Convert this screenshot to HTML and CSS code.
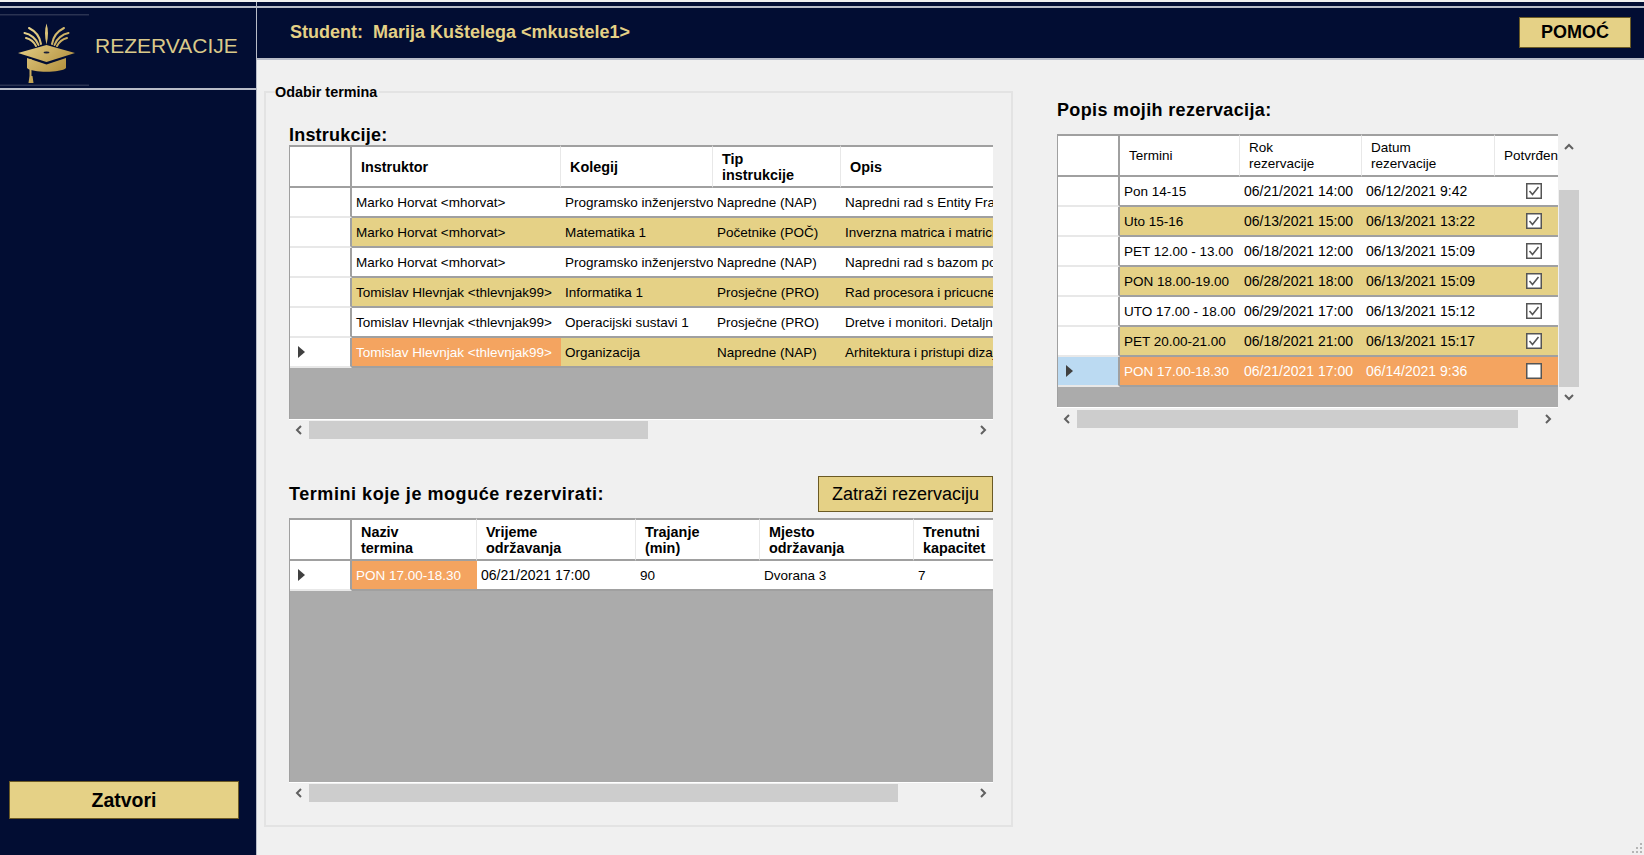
FILE: index.html
```html
<!DOCTYPE html>
<html lang="en">
<head>
    <meta charset="UTF-8">
    <meta name="viewport" content="width=device-width, initial-scale=1.0">
    <title>Rezervacije</title>
    <link rel="stylesheet" href="styles.css">
</head>
<body>
<svg class="defs" width="0" height="0">
    <defs>
        <linearGradient id="gold" gradientUnits="userSpaceOnUse" x1="20" y1="10" x2="72" y2="66">
            <stop offset="0" stop-color="#f3e09a"/>
            <stop offset="1" stop-color="#a8832f"/>
        </linearGradient>
        <symbol id="arrow-left" viewBox="0 0 10 10"><path d="M7 1 3 5l4 4" fill="none" stroke="#606060" stroke-width="2"/></symbol>
        <symbol id="arrow-right" viewBox="0 0 10 10"><path d="M3 1l4 4-4 4" fill="none" stroke="#606060" stroke-width="2"/></symbol>
        <symbol id="arrow-up" viewBox="0 0 10 10"><path d="M1 7l4-4 4 4" fill="none" stroke="#606060" stroke-width="2"/></symbol>
        <symbol id="arrow-down" viewBox="0 0 10 10"><path d="M1 3l4 4 4-4" fill="none" stroke="#606060" stroke-width="2"/></symbol>
        <symbol id="check-on" viewBox="0 0 16 16"><rect x=".75" y=".75" width="14.500" height="14.500" fill="#fff" stroke="#555" stroke-width="1.500"/><path d="M3.500 8l3 3.500 6-7.500" fill="none" stroke="#555" stroke-width="1.600"/></symbol>
        <symbol id="check-off" viewBox="0 0 16 16"><rect x=".75" y=".75" width="14.500" height="14.500" fill="#fff" stroke="#555" stroke-width="1.500"/></symbol>
    </defs>
</svg>

<div class="app">
    <aside class="sidebar">
        <div class="logo-panel">
            <svg class="logo" width="90" height="73" viewBox="0 0 90 73">
                <rect x="0" y="0" width="89" height="1.500" fill="#2a3352"/>
                <rect x="0" y="70.500" width="89" height="1.500" fill="#2a3352"/>
                <path d="M46.500 9.500c2 6 2 13 0 21c-2-8-2-15 0-21z" fill="url(#gold)"/>
                <g fill="none" stroke="url(#gold)" stroke-width="2" stroke-linecap="round">
                    <path d="M41 30c-1-7-6-13-12-16"/>
                    <path d="M52 30c1-7 6-13 12-16"/>
                    <path d="M38.500 31c-2-6-8-11-14-12"/>
                    <path d="M54.500 31c2-6 8-11 14-12"/>
                    <path d="M36 32c-2-4-6-7-10-8"/>
                    <path d="M57 32c2-4 6-7 10-8"/>
                </g>
                <path d="M18 39 46.500 31 75 39 46.500 48z" fill="url(#gold)"/>
                <ellipse cx="46.500" cy="38.500" rx="3" ry="1" fill="#1a1f3a"/>
                <path d="M27 44l19.500 6.500L66 44v10c-5 5-34 5-39 0z" fill="url(#gold)"/>
                <path d="M29.500 45h2v17h1l1 7h-5l1-7z" fill="url(#gold)"/>
            </svg>
            <span class="logo-text">REZERVACIJE</span>
        </div>
        <button class="gold-btn close-btn">Zatvori</button>
    </aside>

    <main class="main">
        <div class="top-strip"></div>
        <header class="topbar">
            <span class="student">Student:&nbsp; Marija Kuštelega &lt;mkustele1&gt;</span>
            <button class="gold-btn help-btn">POMOĆ</button>
        </header>

        <div class="content">
            <fieldset class="group">
                <legend>Odabir termina</legend>

                <h2 class="section-title first">Instrukcije:</h2>
                <div class="grid">
                    <table class="table-a">
                        <colgroup>
                            <col class="c-head"><col class="c-209"><col class="c-152"><col class="c-128"><col class="c-400">
                        </colgroup>
                        <thead class="bold-head">
                            <tr><th></th><th>Instruktor</th><th>Kolegij</th><th>Tip<br>instrukcije</th><th>Opis</th></tr>
                        </thead>
                        <tbody>
                            <tr><th></th><td>Marko Horvat &lt;mhorvat&gt;</td><td>Programsko inženjerstvo</td><td>Napredne (NAP)</td><td>Napredni rad s Entity Framework</td></tr>
                            <tr class="alt"><th></th><td>Marko Horvat &lt;mhorvat&gt;</td><td>Matematika 1</td><td>Početnike (POČ)</td><td>Inverzna matrica i matricne jednadzbe</td></tr>
                            <tr><th></th><td>Marko Horvat &lt;mhorvat&gt;</td><td>Programsko inženjerstvo</td><td>Napredne (NAP)</td><td>Napredni rad s bazom podataka</td></tr>
                            <tr class="alt"><th></th><td>Tomislav Hlevnjak &lt;thlevnjak99&gt;</td><td>Informatika 1</td><td>Prosječne (PRO)</td><td>Rad procesora i pricucne memorije</td></tr>
                            <tr><th></th><td>Tomislav Hlevnjak &lt;thlevnjak99&gt;</td><td>Operacijski sustavi 1</td><td>Prosječne (PRO)</td><td>Dretve i monitori. Detaljna analiza</td></tr>
                            <tr class="alt"><th class="current"><i class="caret"></i></th><td class="picked">Tomislav Hlevnjak &lt;thlevnjak99&gt;</td><td>Organizacija</td><td>Napredne (NAP)</td><td>Arhitektura i pristupi dizajnu sustava</td></tr>
                        </tbody>
                    </table>
                </div>
                <div class="hscroll">
                    <svg class="arrow"><use href="#arrow-left"/></svg>
                    <div class="thumb thumb-a"></div>
                    <svg class="arrow arrow-end"><use href="#arrow-right"/></svg>
                </div>

                <div class="title-row">
                    <h2 class="section-title spaced">Termini koje je moguće rezervirati:</h2>
                    <button class="gold-btn request-btn">Zatraži rezervaciju</button>
                </div>
                <div class="grid grid-tall">
                    <table class="table-b">
                        <colgroup>
                            <col class="c-head"><col class="c-125"><col class="c-159"><col class="c-124"><col class="c-154"><col class="c-100">
                        </colgroup>
                        <thead class="bold-head">
                            <tr><th></th><th>Naziv<br>termina</th><th>Vrijeme<br>održavanja</th><th>Trajanje<br>(min)</th><th>Mjesto<br>održavanja</th><th>Trenutni<br>kapacitet</th></tr>
                        </thead>
                        <tbody>
                            <tr><th><i class="caret"></i></th><td class="picked">PON 17.00-18.30</td><td class="date">06/21/2021 17:00</td><td>90</td><td>Dvorana 3</td><td>7</td></tr>
                        </tbody>
                    </table>
                </div>
                <div class="hscroll">
                    <svg class="arrow"><use href="#arrow-left"/></svg>
                    <div class="thumb thumb-b"></div>
                    <svg class="arrow arrow-end"><use href="#arrow-right"/></svg>
                </div>
            </fieldset>

            <section class="reservations">
                <h2 class="section-title wide">Popis mojih rezervacija:</h2>
                <div class="res-wrap">
                    <div class="res-left">
                        <div class="grid grid-res">
                            <table class="table-c">
                                <colgroup>
                                    <col class="c-head"><col class="c-120"><col class="c-122"><col class="c-133"><col class="c-64">
                                </colgroup>
                                <thead>
                                    <tr><th></th><th>Termini</th><th>Rok<br>rezervacije</th><th>Datum<br>rezervacije</th><th>Potvrđen</th></tr>
                                </thead>
                                <tbody>
                                    <tr><th></th><td>Pon 14-15</td><td class="date">06/21/2021 14:00</td><td class="date">06/12/2021 9:42</td><td class="tick"><svg class="check"><use href="#check-on"/></svg></td></tr>
                                    <tr class="alt"><th></th><td>Uto 15-16</td><td class="date">06/13/2021 15:00</td><td class="date">06/13/2021 13:22</td><td class="tick"><svg class="check"><use href="#check-on"/></svg></td></tr>
                                    <tr><th></th><td>PET 12.00 - 13.00</td><td class="date">06/18/2021 12:00</td><td class="date">06/13/2021 15:09</td><td class="tick"><svg class="check"><use href="#check-on"/></svg></td></tr>
                                    <tr class="alt"><th></th><td>PON 18.00-19.00</td><td class="date">06/28/2021 18:00</td><td class="date">06/13/2021 15:09</td><td class="tick"><svg class="check"><use href="#check-on"/></svg></td></tr>
                                    <tr><th></th><td>UTO 17.00 - 18.00</td><td class="date">06/29/2021 17:00</td><td class="date">06/13/2021 15:12</td><td class="tick"><svg class="check"><use href="#check-on"/></svg></td></tr>
                                    <tr class="alt"><th></th><td>PET 20.00-21.00</td><td class="date">06/18/2021 21:00</td><td class="date">06/13/2021 15:17</td><td class="tick"><svg class="check"><use href="#check-on"/></svg></td></tr>
                                    <tr class="selected"><th class="current blue"><i class="caret"></i></th><td>PON 17.00-18.30</td><td class="date">06/21/2021 17:00</td><td class="date">06/14/2021 9:36</td><td class="tick"><svg class="check"><use href="#check-off"/></svg></td></tr>
                                </tbody>
                            </table>
                        </div>
                        <div class="hscroll">
                            <svg class="arrow"><use href="#arrow-left"/></svg>
                            <div class="thumb thumb-c"></div>
                            <svg class="arrow arrow-end"><use href="#arrow-right"/></svg>
                        </div>
                    </div>
                    <div class="vscroll">
                        <svg class="arrow"><use href="#arrow-up"/></svg>
                        <div class="vthumb"></div>
                        <svg class="arrow"><use href="#arrow-down"/></svg>
                    </div>
                </div>
            </section>
        </div>
    </main>
</div>

<svg class="grip" width="14" height="14" viewBox="0 0 14 14" fill="#b5b5b5">
    <rect x="10" y="2" width="2" height="2"/>
    <rect x="6" y="6" width="2" height="2"/><rect x="10" y="6" width="2" height="2"/>
    <rect x="2" y="10" width="2" height="2"/><rect x="6" y="10" width="2" height="2"/><rect x="10" y="10" width="2" height="2"/>
</svg>
</body>
</html>
```

FILE: styles.css
```css
* {
    box-sizing: border-box;
}

body {
    font-family: "Liberation Sans", Arial, sans-serif;
    background-color: #f0f0f0;
    margin: 0;
    height: 855px;
    overflow: hidden;
    color: #000;
}

.defs {
    display: block;
    height: 0;
}

.app {
    display: flex;
    height: 855px;
    padding-top: 2px;
}

/* sidebar */
.sidebar {
    width: 257px;
    flex-shrink: 0;
    background-color: #020d33;
    border-right: 1px solid #b8bcc8;
    display: flex;
    flex-direction: column;
    padding-top: 4px;
}

.logo-panel {
    height: 84px;
    border-top: 2px solid #b8bcc8;
    border-bottom: 2px solid #b8bcc8;
    display: flex;
    align-items: center;
}

.logo {
    flex-shrink: 0;
    margin-top: 4px;
}

.logo-text {
    margin: 0 0 4px 5px;
    font-size: 21px;
    color: #d9c98a;
}

.gold-btn {
    font-family: "Liberation Sans", Arial, sans-serif;
    background-color: #e5d186;
    border: 1px solid #6b5a24;
    color: #000;
    padding: 0;
}

.close-btn {
    margin: auto 0 36px 9px;
    width: 230px;
    height: 38px;
    font-size: 19.500px;
    font-weight: bold;
}

/* top bar */
.main {
    flex: 1;
    min-width: 0;
    display: flex;
    flex-direction: column;
}

.top-strip {
    height: 4px;
    background-color: #020d33;
}

.topbar {
    height: 54px;
    background-color: #020d33;
    border-top: 2px solid #b8bcc8;
    border-bottom: 2px solid #b8bcc8;
    display: flex;
    align-items: center;
    justify-content: space-between;
    padding: 0 13px 2px 33px;
}

.student {
    color: #e5d186;
    font-size: 18px;
    font-weight: bold;
}

.help-btn {
    width: 112px;
    height: 31px;
    font-size: 18px;
    font-weight: bold;
}

/* content */
.content {
    display: flex;
    align-items: flex-start;
}

.group {
    margin: 24px 0 0 7px;
    padding: 0 0 0 23px;
    width: 749px;
    height: 743px;
    border: 2px solid #e3e3e3;
    min-width: 0;
}

.group legend {
    margin-left: -14px;
    padding: 0 2px 0 0;
    font-size: 14.400px;
    font-weight: bold;
    line-height: 16px;
}

.section-title {
    margin: 0;
    font-size: 18px;
    font-weight: bold;
    line-height: 20px;
}

.section-title.first {
    margin-top: 25px;
    letter-spacing: .2px;
}

.section-title.spaced {
    letter-spacing: .55px;
}

.section-title.wide {
    letter-spacing: .35px;
}

.title-row {
    width: 704px;
    display: flex;
    align-items: center;
    justify-content: space-between;
    margin-top: 37px;
    margin-bottom: 6px;
}

.request-btn {
    width: 175px;
    height: 36px;
    font-size: 18px;
}

/* data grids */
.grid {
    width: 704px;
    height: 274px;
    background-color: #ababab;
    border-left: 1px solid #a0a0a0;
    overflow: hidden;
}

.grid-tall {
    height: 264px;
}

.grid-res {
    width: 501px;
    height: 273px;
}

.grid table {
    border-collapse: separate;
    border-spacing: 0;
    table-layout: fixed;
    font-size: 13.500px;
}

.table-a { width: 951px; }
.table-b { width: 724px; }
.table-c { width: 501px; }

.c-head { width: 62px; }
.c-209 { width: 209px; }
.c-152 { width: 152px; }
.c-128 { width: 128px; }
.c-400 { width: 400px; }
.c-125 { width: 125px; }
.c-159 { width: 159px; }
.c-124 { width: 124px; }
.c-154 { width: 154px; }
.c-100 { width: 100px; }
.c-120 { width: 120px; }
.c-122 { width: 122px; }
.c-133 { width: 133px; }
.c-64 { width: 64px; }

.grid thead th {
    height: 43px;
    background-color: #fff;
    border-top: 2px solid #a0a0a0;
    border-bottom: 2px solid #a0a0a0;
    border-right: 1px solid #e8e8e8;
    padding: 0 0 0 9px;
    text-align: left;
    font-weight: normal;
    line-height: 16px;
    white-space: nowrap;
    overflow: hidden;
}

.grid thead th:first-child {
    border-right: 2px solid #a0a0a0;
}

.bold-head th {
    font-size: 14.400px;
    font-weight: bold !important;
}

.grid tbody th {
    height: 30px;
    padding: 0;
    background-color: #fff;
    border-right: 2px solid #a0a0a0;
    border-bottom: 2px solid #e8e8e8;
    text-align: left;
}

.grid td {
    height: 30px;
    padding: 0 0 0 4px;
    background-color: #fff;
    border-bottom: 2px solid #a0a0a0;
    white-space: nowrap;
    overflow: hidden;
}

.grid td.date {
    font-size: 14px;
}

.grid .alt td {
    background-color: #e5d186;
}

.grid td.picked,
.grid .selected td {
    background-color: #f4a460;
    color: #fff;
}

.grid th.blue {
    background-color: #bbdaf2;
}

.grid td.tick {
    padding: 0;
}

.caret {
    display: block;
    margin-left: 8px;
    width: 0;
    height: 0;
    border-top: 6px solid transparent;
    border-bottom: 6px solid transparent;
    border-left: 7px solid #404040;
}

.check {
    display: block;
    margin-left: 31px;
    width: 16px;
    height: 16px;
}

/* scrollbars */
.hscroll {
    width: 704px;
    height: 20px;
    display: flex;
    align-items: center;
    border-top: 1px solid #fff;
}

.res-left .hscroll {
    width: 501px;
    height: 22px;
}

.arrow {
    display: block;
    width: 10px;
    height: 10px;
    flex-shrink: 0;
    margin: 0 5px;
}

.arrow-end {
    margin-left: auto;
}

.thumb {
    height: 18px;
    background-color: #cdcdcd;
}

.thumb-a {
    width: 339px;
}

.thumb-b {
    width: 589px;
}

.thumb-c {
    width: 441px;
}

.reservations {
    margin: 40px 0 0 44px;
}

.reservations .section-title {
    margin-bottom: 14px;
}

.res-wrap {
    display: flex;
    align-items: flex-start;
}

.vscroll {
    width: 20px;
    margin-left: 1px;
    padding-top: 3px;
    display: flex;
    flex-direction: column;
    align-items: center;
}

.vscroll .arrow {
    margin: 5px 0;
}

.vthumb {
    width: 20px;
    height: 197px;
    background-color: #cdcdcd;
    margin-top: 33px;
}

.grip {
    position: absolute;
    right: 0;
    bottom: 0;
}
```
